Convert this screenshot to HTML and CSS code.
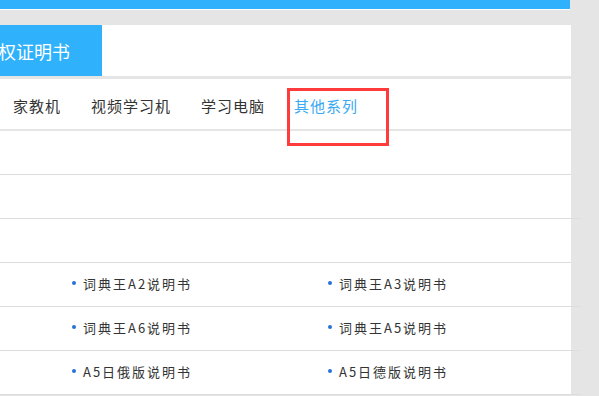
FILE: index.html
```html
<!DOCTYPE html>
<html lang="zh-CN">
<head>
    <meta charset="UTF-8">
    <meta name="viewport" content="width=device-width, initial-scale=1.0">
    <title>说明书下载</title>
    <link rel="stylesheet" href="styles.css">
</head>
<body>

<div class="topbar"></div>

<div class="title-panel">
    <div class="tab"><span>授权证明书</span></div>
</div>

<div class="nav">
    <a class="nav-item">家教机</a>
    <a class="nav-item">视频学习机</a>
    <a class="nav-item">学习电脑</a>
    <a class="nav-item active">其他系列</a>
</div>

<div class="list">
    <div class="row"></div>
    <div class="row wide"></div>
    <div class="row"></div>
    <div class="row wide">
        <span class="item">词典王A2说明书</span>
        <span class="item">词典王A3说明书</span>
    </div>
    <div class="row wide">
        <span class="item">词典王A6说明书</span>
        <span class="item">词典王A5说明书</span>
    </div>
    <div class="row wide">
        <span class="item">A5日俄版说明书</span>
        <span class="item">A5日德版说明书</span>
    </div>
</div>

<!-- annotation box over the active tab -->
<div class="mark"></div>

</body>
</html>
```

FILE: styles.css
```css
* {
    margin: 0;
    padding: 0;
    box-sizing: border-box;
}

body, html {
    width: 100%;
    height: 100%;
    overflow: hidden;
    font-family: "Noto Sans CJK SC", "Noto Sans", sans-serif;
    background-color: #e5e5e5;
    color: #333;
}

.topbar {
    width: 570px;
    height: 10px;
    background-color: #30b1fc;
    border-bottom: 1px solid #fff;
}

.title-panel {
    width: 571px;
    height: 51px;
    margin-top: 15px;
    background-color: #fff;
}

.tab {
    width: 102px;
    height: 51px;
    background-color: #30b1fc;
    color: #fff;
    font-size: 18px;
    display: flex;
    align-items: center;
    justify-content: flex-end;
    padding-right: 32px;
    overflow: hidden;
    white-space: nowrap;
}

.nav {
    width: 571px;
    height: 52px;
    margin-top: 3px;
    background-color: #fff;
    border-bottom: 2px solid #e5e5e5;
    display: flex;
    align-items: center;
    padding: 2px 0 0 13px;
    gap: 30px;
}

.nav-item {
    font-size: 15px;
    letter-spacing: 1px;
    color: #333;
    white-space: nowrap;
    cursor: pointer;
}

.nav-item.active {
    color: #3aa9f2;
    margin-left: -1px;
}

.list {
    width: 571px;
    background-color: #fff;
}

.row {
    height: 44px;
    border-bottom: 1px solid #dddddd;
    display: grid;
    grid-template-columns: 256px 256px;
    align-items: center;
    padding: 0 0 3px 67px;
}

.row.wide {
    margin-right: -10px;
}

.item {
    display: flex;
    align-items: center;
    font-size: 13px;
    letter-spacing: 2px;
    white-space: nowrap;
    padding-left: 5px;
}

.item::before {
    content: "";
    width: 4px;
    height: 4px;
    border-radius: 50%;
    background-color: #2b72d2;
    margin-right: 7px;
}

.mark {
    position: absolute;
    left: 287px;
    top: 88px;
    width: 102px;
    height: 58px;
    border: 3px solid #ff3b3b;
}
```
